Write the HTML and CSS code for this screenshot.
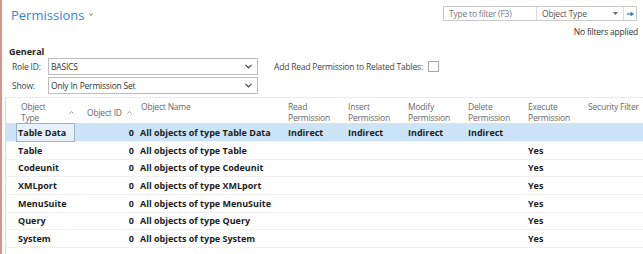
FILE: index.html
```html
<!DOCTYPE html>
<html>
<head>
<meta charset="utf-8">
<link rel="stylesheet" href="styles.css">
</head>
<body>
<div class="app">
  <header class="topbar">
    <h1 class="title"><span>Permissions</span><svg class="title-caret" width="4" height="3" viewBox="0 0 4 3"><path d="M0.3 0.5L2 2.4L3.7 0.5" fill="none" stroke="#555" stroke-width="0.9"/></svg></h1>
    <div class="filter-area">
      <div class="filterbox">
        <span class="f-input">Type to filter (F3)</span>
        <span class="f-field"><span>Object Type</span><svg class="f-drop" width="5" height="3" viewBox="0 0 5 3"><path d="M0 0h5L2.5 3z" fill="#666"/></svg></span>
        <span class="f-go"><svg width="7" height="6" viewBox="0 0 7 6"><path d="M0 3h4.5" stroke="#2f7fd0" stroke-width="1.3"/><path d="M3.5 0.5L7 3L3.5 5.5z" fill="#2f7fd0"/></svg></span>
      </div>
      <div class="nofilter">No filters applied</div>
    </div>
  </header>

  <section class="general">
    <div class="gen-title">General</div>
    <div class="gen-body">
      <div class="gen-left">
        <div class="field">
          <span class="label">Role ID:</span>
          <div class="select"><span>BASICS</span><svg width="7" height="5" viewBox="0 0 7 5"><path d="M0.5 0.8L3.5 3.8L6.5 0.8" fill="none" stroke="#444" stroke-width="1.2"/></svg></div>
        </div>
        <div class="field">
          <span class="label">Show:</span>
          <div class="select"><span>Only In Permission Set</span><svg width="7" height="5" viewBox="0 0 7 5"><path d="M0.5 0.8L3.5 3.8L6.5 0.8" fill="none" stroke="#444" stroke-width="1.2"/></svg></div>
        </div>
      </div>
      <div class="gen-right">
        <span class="label">Add Read Permission to Related Tables:</span>
        <span class="checkbox"></span>
      </div>
    </div>
  </section>

  <div class="grid">
    <div class="row head">
      <div class="cell c-type"><span>Object<br>Type</span><svg class="sort" width="5" height="3" viewBox="0 0 5 3"><path d="M0.3 2.7L2.5 0.5L4.7 2.7" fill="none" stroke="#999" stroke-width="0.9"/></svg></div>
      <div class="cell c-id"><span>Object ID</span><svg class="sort" width="5" height="3" viewBox="0 0 5 3"><path d="M0.3 2.7L2.5 0.5L4.7 2.7" fill="none" stroke="#999" stroke-width="0.9"/></svg></div>
      <div class="cell c-name">Object Name</div>
      <div class="cell">Read<br>Permission</div>
      <div class="cell">Insert<br>Permission</div>
      <div class="cell">Modify<br>Permission</div>
      <div class="cell">Delete<br>Permission</div>
      <div class="cell">Execute<br>Permission</div>
      <div class="cell">Security Filter</div>
    </div>

    <div class="row selected">
      <div class="cell c-type"><span class="cur">Table Data</span></div>
      <div class="cell c-id">0</div>
      <div class="cell c-name">All objects of type Table Data</div>
      <div class="cell">Indirect</div>
      <div class="cell">Indirect</div>
      <div class="cell">Indirect</div>
      <div class="cell">Indirect</div>
      <div class="cell"></div>
      <div class="cell"></div>
    </div>
    <div class="row">
      <div class="cell c-type">Table</div>
      <div class="cell c-id">0</div>
      <div class="cell c-name">All objects of type Table</div>
      <div class="cell"></div><div class="cell"></div><div class="cell"></div><div class="cell"></div>
      <div class="cell">Yes</div>
      <div class="cell"></div>
    </div>
    <div class="row">
      <div class="cell c-type">Codeunit</div>
      <div class="cell c-id">0</div>
      <div class="cell c-name">All objects of type Codeunit</div>
      <div class="cell"></div><div class="cell"></div><div class="cell"></div><div class="cell"></div>
      <div class="cell">Yes</div>
      <div class="cell"></div>
    </div>
    <div class="row">
      <div class="cell c-type">XMLport</div>
      <div class="cell c-id">0</div>
      <div class="cell c-name">All objects of type XMLport</div>
      <div class="cell"></div><div class="cell"></div><div class="cell"></div><div class="cell"></div>
      <div class="cell">Yes</div>
      <div class="cell"></div>
    </div>
    <div class="row">
      <div class="cell c-type">MenuSuite</div>
      <div class="cell c-id">0</div>
      <div class="cell c-name">All objects of type MenuSuite</div>
      <div class="cell"></div><div class="cell"></div><div class="cell"></div><div class="cell"></div>
      <div class="cell">Yes</div>
      <div class="cell"></div>
    </div>
    <div class="row">
      <div class="cell c-type">Query</div>
      <div class="cell c-id">0</div>
      <div class="cell c-name">All objects of type Query</div>
      <div class="cell"></div><div class="cell"></div><div class="cell"></div><div class="cell"></div>
      <div class="cell">Yes</div>
      <div class="cell"></div>
    </div>
    <div class="row">
      <div class="cell c-type">System</div>
      <div class="cell c-id">0</div>
      <div class="cell c-name">All objects of type System</div>
      <div class="cell"></div><div class="cell"></div><div class="cell"></div><div class="cell"></div>
      <div class="cell">Yes</div>
      <div class="cell"></div>
    </div>
  </div>
</div>
</body>
</html>
```
FILE: styles.css
```css
* { box-sizing: border-box; }
html, body { margin: 0; padding: 0; background: #fff; }
body {
  font-family: "Open Sans", "Noto Sans", sans-serif;
  font-size: 8.5px;
  letter-spacing: -0.2px;
  color: #333;
  width: 643px;
  height: 254px;
  overflow: hidden;
}
.app {
  border-left: 2px solid #d3968b;
  height: 254px;
  overflow: hidden;
}
.topbar {
  display: flex;
  justify-content: space-between;
  align-items: flex-start;
  height: 40px;
  padding: 0 6px 0 9px;
}
.title {
  margin: 5px 0 0 0;
  height: 20px;
  font-size: 13px;
  line-height: 20px;
  font-weight: 400;
  letter-spacing: 0;
  color: #3584d2;
  display: flex;
  align-items: center;
  gap: 5px;
}
.title-caret { display: block; margin-top: -1px; }
.filter-area { display: flex; flex-direction: column; align-items: flex-end; }
.filterbox {
  margin-top: 6px;
  height: 15px;
  width: 194px;
  border: 1px solid #c9c9c9;
  display: flex;
  align-items: stretch;
  line-height: 13px;
}
.f-input { width: 93px; padding-left: 5px; color: #7a7a7a; border-right: 1px solid #dcdcdc; }
.f-field { flex: 1; padding: 0 5px 0 5px; color: #555; display: flex; justify-content: space-between; align-items: center; border-right: 1px solid #dcdcdc; }
.f-go { width: 12px; display: flex; align-items: center; justify-content: center; }
.nofilter { margin-top: 5px; line-height: 12px; color: #333; margin-right: -1px; }

.general { padding: 0 0 0 7px; }
.gen-title { font-weight: 700; font-size: 9px; letter-spacing: 0; color: #222; line-height: 12px; margin-top: 6px; }
.gen-body { display: flex; align-items: flex-start; }
.gen-left { display: flex; flex-direction: column; gap: 2px; padding-left: 3px; }
.field { display: flex; align-items: center; height: 17px; }
.label { color: #444; }
.field .label { width: 36px; }
.select {
  width: 210px;
  height: 17px;
  border: 1px solid #bdbdbd;
  display: flex;
  align-items: center;
  justify-content: space-between;
  padding: 0 5px 0 2px;
  color: #333;
}
.gen-right { display: flex; align-items: center; height: 17px; margin-left: 16px; gap: 5px; }
.checkbox { width: 11px; height: 11px; border: 1px solid #a6a6a6; background: #fff; }

.grid {
  margin: 3px 0 0 3px;
  border-left: 1px solid #dcdcdc;
  height: 157px;
}
.row {
  display: grid;
  grid-template-columns: 76px 55px 147px 60px 60px 60px 60px 60px 1fr;
  height: 17.67px;
  border-bottom: 1px solid #f1f1f1;
  font-weight: 700;
  font-size: 9px;
  letter-spacing: 0;
  color: #1c1c1c;
  align-items: center;
}
.row.head {
  height: 26px;
  border-top: 1px solid #ececec;
  border-bottom: none;
  font-weight: 400;
  font-size: 8.5px;
  letter-spacing: -0.2px;
  color: #6a6a6a;
  line-height: 11px;
  align-items: start;
  padding-top: 3px;
}
.row.selected { background: #cce4f7; height: 19px; }
.cell { padding-left: 4px; white-space: nowrap; }
.c-type { padding-left: 12px; }
.head .c-type { padding-left: 15px; padding-right: 8px; display: flex; justify-content: space-between; align-items: center; height: 22px; }
.c-id { text-align: right; padding-right: 3px; }
.head .c-id { text-align: left; padding-left: 5px; padding-right: 5px; display: flex; justify-content: space-between; align-items: center; height: 22px; }
.c-name { padding-left: 3px; }
.head .c-name { padding-left: 4px; }
.sort { display: block; }
.cur {
  display: block;
  margin-left: -1px;
  width: 59px;
  height: 19px;
  line-height: 17px;
  border: 1px solid #9fb3c6;
  background: #e6f1fb;
  padding-left: 1px;
}
.selected .c-type { padding-left: 11px; }
```
